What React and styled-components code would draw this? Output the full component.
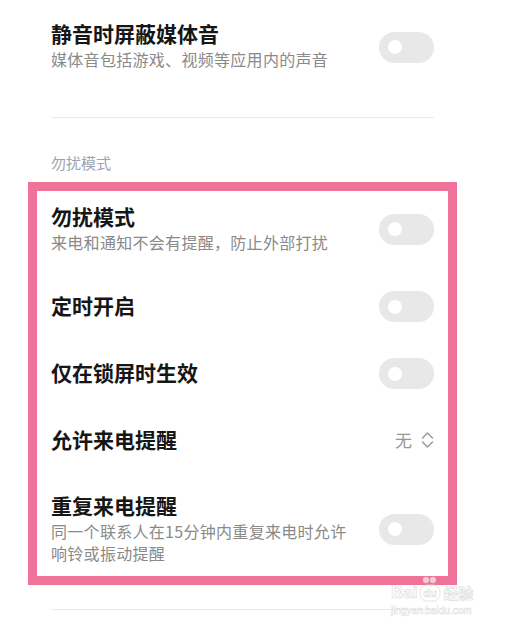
import React from 'react';
import styled, { createGlobalStyle } from 'styled-components';

const GlobalStyle = createGlobalStyle`
  html, body {
    margin: 0;
    padding: 0;
    background: #fff;
  }
  body {
    font-family: "Noto Sans CJK SC", "Noto Sans", sans-serif;
    -webkit-font-smoothing: antialiased;
  }
`;

const Page = styled.div`
  position: relative;
  width: 429px;
  padding-left: 28px;
  padding-bottom: 22px;
`;

const Plain = styled.div`
  padding: 0 23px;
`;

const Row = styled.div`
  display: flex;
  align-items: center;
  justify-content: space-between;
  padding: 18px 0;
  &:first-child {
    padding-top: 12px;
  }
  &:last-child {
    padding-bottom: 10px;
  }
`;

const TopRow = styled(Row)`
  padding: 21px 0 0;
  &:first-child { padding-top: 21px; }
  &:last-child { padding-bottom: 0; }
`;

const Text = styled.div`
  max-width: 302px;
  transform: translateY(-${p => p.$lift || 2}px);
`;

const Title = styled.div`
  font-size: 21px;
  line-height: 30px;
  font-weight: 600;
  color: #161616;
`;

const Sub = styled.div`
  font-size: 16px;
  line-height: 22px;
  letter-spacing: 0.3px;
  color: #8a8a8a;
`;

const Divider = styled.div`
  height: 1px;
  background: #eaeaea;
  margin-top: ${p => p.$top}px;
`;

const SectionHead = styled.div`
  margin-top: 36px;
  margin-bottom: 8px;
  font-size: 15px;
  line-height: 20px;
  color: #9ea3ad;
  transform: translateY(-1px);
`;

const Frame = styled.div`
  border: 9px solid #ef7399;
  padding: 0 14px;
`;

const Track = styled.div`
  flex: none;
  position: relative;
  width: 55px;
  height: 31px;
  border-radius: 16px;
  background: #e8e8e8;
  &::after {
    content: '';
    position: absolute;
    left: 9px;
    top: 8.5px;
    width: 14px;
    height: 14px;
    border-radius: 50%;
    background: #fff;
  }
`;

const Picker = styled.div`
  display: flex;
  align-items: center;
  gap: 9px;
  height: 31px;
  font-size: 17px;
  color: #979797;
  transform: translateY(-1px);
`;

const Bottom = styled.div`
  padding: 0 23px;
  margin-top: 24px;
`;

const Watermark = styled.div`
  position: absolute;
  left: 391px;
  top: 576px;
  width: 96px;
  pointer-events: none;
  color: rgba(255, 255, 255, 0.85);
  font-family: "Liberation Sans", Arial, sans-serif;
`;

const MarkLine = styled.div`
  display: flex;
  align-items: flex-end;
  gap: 2px;
  font-size: 17px;
  font-weight: 700;
  line-height: 16px;
  -webkit-text-stroke: 0.7px #dedede;
  span.cn {
    font-family: "Noto Sans CJK SC", sans-serif;
    font-size: 15px;
  }
`;

const MarkUrl = styled.div`
  margin-top: 5px;
  font-size: 10px;
  line-height: 10px;
  -webkit-text-stroke: 0.5px #e0e0e0;
`;

function Toggle() {
  return <Track />;
}

function Chevrons() {
  return (
    <svg width="13" height="18" viewBox="0 0 13 18" fill="none">
      <polyline points="1.5,7 6.5,2 11.5,7" stroke="#9a9a9a" strokeWidth="1.5" strokeLinecap="round" strokeLinejoin="round" />
      <polyline points="1.5,11 6.5,16 11.5,11" stroke="#9a9a9a" strokeWidth="1.5" strokeLinecap="round" strokeLinejoin="round" />
    </svg>
  );
}

function Paw() {
  return (
    <svg width="22" height="26" viewBox="0 0 22 26" style={{ marginBottom: '-1px' }}>
      <circle cx="7" cy="4" r="3" fill="rgba(255,255,255,0.6)" stroke="#e6c5d0" strokeWidth="0.6" />
      <circle cx="14" cy="4" r="3" fill="rgba(255,255,255,0.6)" stroke="#e6c5d0" strokeWidth="0.6" />
      <rect x="1" y="9" width="20" height="16" rx="7" fill="rgba(255,255,255,0.8)" stroke="#dcdcdc" strokeWidth="0.8" />
      <text x="11" y="21" textAnchor="middle" fontSize="11" fontWeight="700" fontFamily="Liberation Sans, sans-serif" fill="#fff" stroke="#d4d4d4" strokeWidth="0.5">du</text>
    </svg>
  );
}

const items = [
  { title: '勿扰模式', sub: '来电和通知不会有提醒，防止外部打扰' },
  { title: '定时开启' },
  { title: '仅在锁屏时生效' },
  { title: '允许来电提醒', value: '无' },
  { title: '重复来电提醒', sub: '同一个联系人在15分钟内重复来电时允许响铃或振动提醒' },
];

export default function App() {
  return (
    <>
      <GlobalStyle />
      <Page>
        <Plain>
          <TopRow>
            <Text $lift={3}>
              <Title>静音时屏蔽媒体音</Title>
              <Sub>媒体音包括游戏、视频等应用内的声音</Sub>
            </Text>
            <Toggle />
          </TopRow>
          <Divider $top={44} />
          <SectionHead>勿扰模式</SectionHead>
        </Plain>
        <Frame>
          {items.map(it => (
            <Row key={it.title}>
              <Text>
                <Title>{it.title}</Title>
                {it.sub && <Sub>{it.sub}</Sub>}
              </Text>
              {it.value ? (
                <Picker>
                  {it.value}
                  <Chevrons />
                </Picker>
              ) : (
                <Toggle />
              )}
            </Row>
          ))}
        </Frame>
        <Bottom>
          <Divider $top={0} />
        </Bottom>
        <Watermark>
          <MarkLine>
            Bai
            <Paw />
            <span className="cn">经验</span>
          </MarkLine>
          <MarkUrl>jingyan.baidu.com</MarkUrl>
        </Watermark>
      </Page>
    </>
  );
}
